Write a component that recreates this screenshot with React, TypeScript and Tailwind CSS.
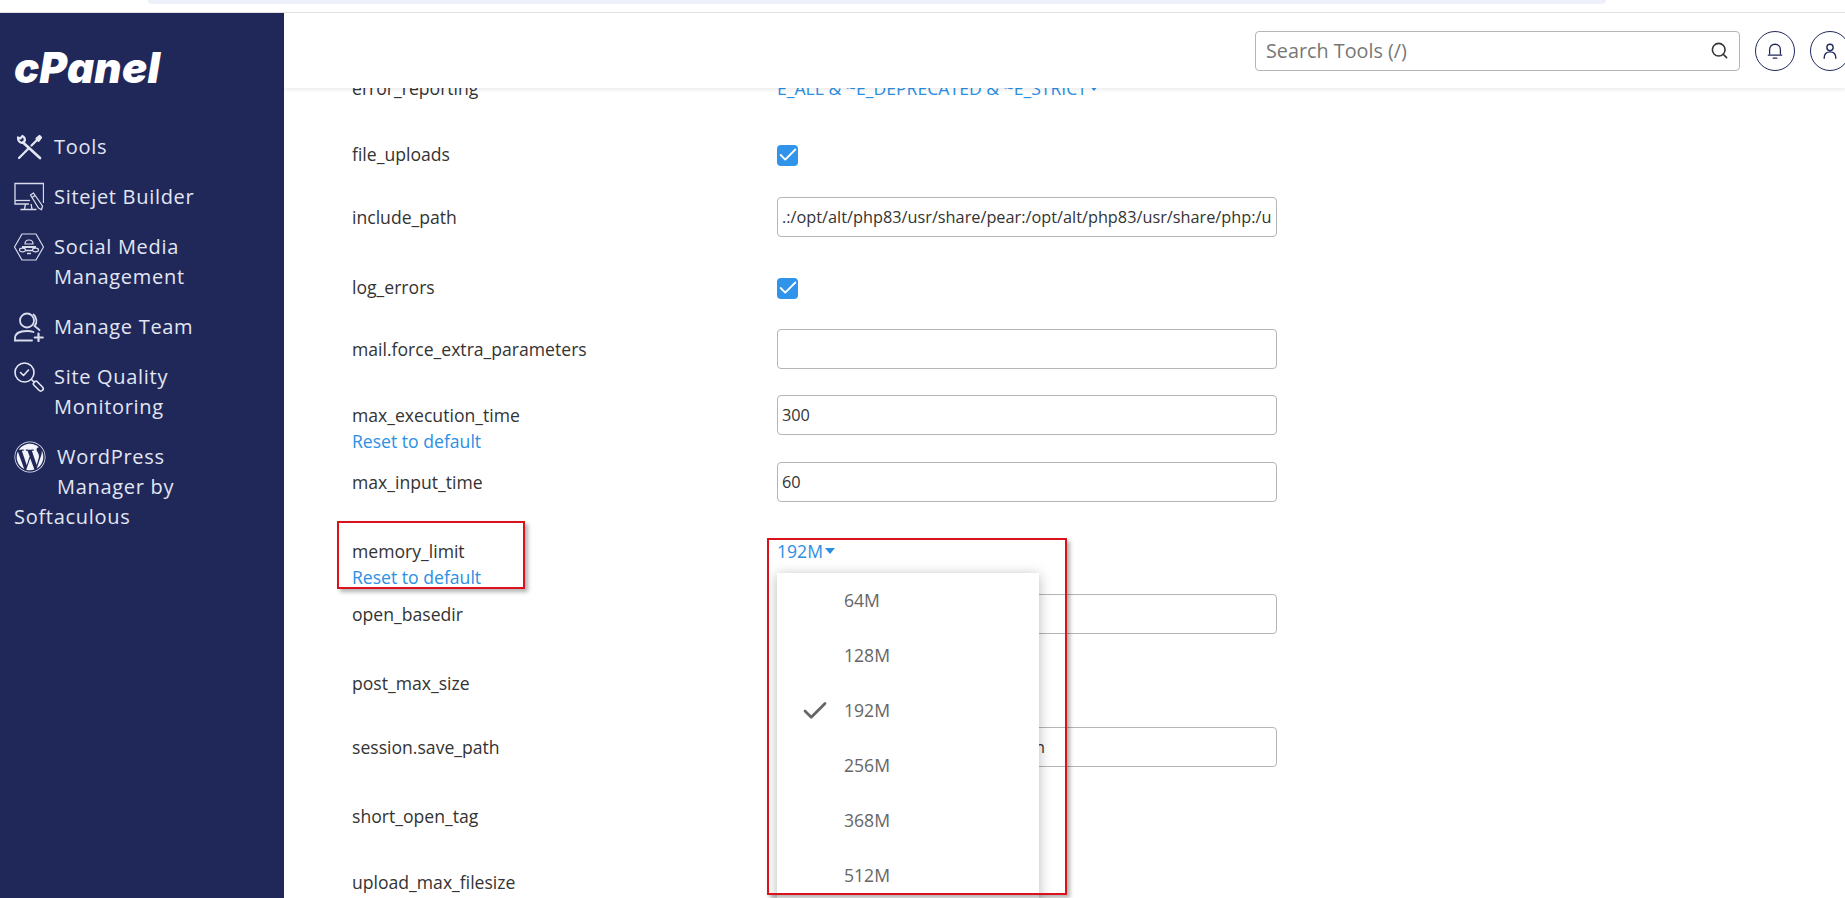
import React from 'react';
import { FaWordpress } from 'react-icons/fa';
import { Check, Search } from 'lucide-react';

function ToolsIcon() {
  return (
    <svg viewBox="0 0 30 30" className="w-[30px] h-[30px] shrink-0 text-[#e6e9f4]" fill="none" stroke="currentColor" strokeWidth="2.200" strokeLinecap="round" strokeLinejoin="round">
      <path d="M5 26 14.500 16.500M17.500 13.500 23 8" />
      <path d="M22.500 6.500 25.500 4 27 5.500 24.500 8.800Z" fill="currentColor" />
      <path d="M9 10.500 26 26" strokeWidth="2.600" />
      <path d="M8.500 4 6.300 6.500 4 5.500C3.500 9 6.500 11.500 9.300 10.600 10.800 9.600 11.200 7.500 10.300 5.500Z" />
    </svg>
  );
}

function SitejetIcon() {
  return (
    <svg viewBox="0 0 30 30" className="w-[30px] h-[30px] shrink-0 text-[#d9dcea]" fill="none" stroke="currentColor" strokeWidth="1.300">
      <path d="M15 22H1V1.500H29.500V21" />
      <path d="M1 18.500H16" />
      <path d="M11.500 22 10.500 27M17 22 18 27M6.500 27.500H22.500" />
      <path d="M16.500 13 19.500 11 28.500 24 27.500 27.800 24.500 26Z" strokeLinejoin="round" />
      <path d="M18 15.500 21 13.500" />
    </svg>
  );
}

function SocialIcon() {
  return (
    <svg viewBox="0 0 30 30" className="w-[30px] h-[30px] shrink-0 text-[#d9dcea]" fill="none" stroke="currentColor" strokeWidth="1.200">
      <path d="M8 2H22L29.500 15 22 28H8L0.500 15Z" strokeLinejoin="round" />
      <path d="M11 12C11 9 13 8 15 8S19 9 19 12Z" />
      <path d="M8 15H22" strokeWidth="2" />
      <ellipse cx="8.500" cy="18" rx="3" ry="1.800" />
      <ellipse cx="21.500" cy="18" rx="3" ry="1.800" />
      <path d="M12 18.500H18M13 21.500H17" strokeWidth="1.500" />
    </svg>
  );
}

function TeamIcon() {
  return (
    <svg viewBox="0 0 30 30" className="w-[30px] h-[30px] shrink-0 text-[#d9dcea]" fill="none" stroke="currentColor" strokeWidth="1.800" strokeLinecap="round">
      <circle cx="13" cy="8.500" r="7" />
      <path d="M19.500 2.500C23 5 23.500 11 20.500 14L25.500 18" />
      <path d="M1 28.500V26.500C1 21.500 6 19 13 19C15.500 19 17.500 19.200 19.500 20" />
      <path d="M1 28.500H18" />
      <path d="M24.500 21.500V29M20.800 25.500H28.800" strokeWidth="2.200" />
    </svg>
  );
}

function QualityIcon() {
  return (
    <svg viewBox="0 0 30 30" className="w-[30px] h-[30px] shrink-0 text-[#e6e9f4]" fill="none" stroke="currentColor" strokeWidth="1.600" strokeLinecap="round" strokeLinejoin="round">
      <circle cx="10.500" cy="10.500" r="9.500" />
      <path d="M6.500 10.500 9.500 13.500 14.500 8" />
      <path d="M17.500 17.500 20 20" />
      <path d="M20 20.500 21 19.500C21.800 19 22.500 19 23 19.500L28.500 25C29.500 26 29.500 27.200 28.500 28.200 27.500 29.200 26 29.200 25 28.200L19.800 23C19 22.200 19.300 21.300 20 20.500Z" />
    </svg>
  );
}

const rows = [
  { label: 'error_reporting', mt: 'mt-0', kind: 'link', value: 'E_ALL & ~E_DEPRECATED & ~E_STRICT' },
  { label: 'file_uploads', mt: 'mt-[27px]', kind: 'check' },
  { label: 'include_path', mt: 'mt-[22px]', kind: 'input', value: '.:/opt/alt/php83/usr/share/pear:/opt/alt/php83/usr/share/php:/usr/share/pear:/usr/share/php' },
  { label: 'log_errors', mt: 'mt-[31px]', kind: 'check' },
  { label: 'mail.force_extra_parameters', mt: 'mt-[21px]', kind: 'input', value: '' },
  { label: 'max_execution_time', mt: 'mt-[26px]', kind: 'input', value: '300', reset: true },
  { label: 'max_input_time', mt: 'mt-[27px]', kind: 'input', value: '60' },
  { label: 'memory_limit', mt: 'mt-[29px]', kind: 'memory', value: '192M', reset: true },
  { label: 'open_basedir', mt: 'mt-[23px]', kind: 'input', value: '' },
  { label: 'post_max_size', mt: 'mt-[29px]', kind: 'none' },
  { label: 'session.save_path', mt: 'mt-[24px]', kind: 'input', value: '/opt/alt/php83/var/lib/php/session' },
  { label: 'short_open_tag', mt: 'mt-[29px]', kind: 'none' },
  { label: 'upload_max_filesize', mt: 'mt-[26px]', kind: 'none' },
];

const memoryOptions = ['64M', '128M', '192M', '256M', '368M', '512M'];

function Caret() {
  return <span className="ml-[2px] w-0 h-0 border-x-[5px] border-x-transparent border-t-[6px] border-t-[#2b8fe3]" />;
}

function MemoryControl({ value }: { value: string }) {
  return (
    <div className="relative h-10 flex items-center text-[#2b8fe3]">
      {value}
      <Caret />
      <div className="absolute left-0 top-[42px] w-[262px] bg-white shadow-[0_2px_12px_rgba(0,0,0,0.28)] z-10 text-[#666]">
        {memoryOptions.map((opt) => (
          <div key={opt} className="h-[55px] flex items-center pl-[67px] relative">
            {opt === '192M' && <Check className="absolute left-[23px] w-[30px] h-[30px]" strokeWidth={2.2} />}
            {opt}
          </div>
        ))}
      </div>
      <div className="absolute left-[-10px] top-[7px] w-[300px] h-[357px] border-[2.5px] border-[#d9121c] shadow-[3px_3px_4px_rgba(0,0,0,0.3)] z-20" />
    </div>
  );
}

function Control({ row }: { row: (typeof rows)[number] }) {
  if (row.kind === 'check') {
    return (
      <div className="h-10 flex items-center">
        <span className="w-[21px] h-[21px] rounded-[4px] bg-[#2f94ea] flex items-center justify-center">
          <Check className="w-[22px] h-[22px] shrink-0 text-white" strokeWidth={2} />
        </span>
      </div>
    );
  }
  if (row.kind === 'input') {
    return (
      <input
        readOnly
        value={row.value}
        className="w-[500px] h-10 px-[4px] text-[16.3px] border border-[#b5b5b5] rounded-[4px] text-[#333] outline-none bg-white"
      />
    );
  }
  if (row.kind === 'link') {
    return (
      <div className="h-10 flex items-center text-[#2b8fe3]">
        {row.value}
        <Caret />
      </div>
    );
  }
  if (row.kind === 'memory') return <MemoryControl value={row.value!} />;
  return <div className="h-10" />;
}

export default function App() {
  return (
    <div className="h-screen overflow-hidden bg-white flex flex-col font-['Open_Sans',sans-serif] text-[17.6px] text-[#333]">
      <div className="h-[13px] shrink-0 border-b border-[#e2e2e2]">
        <div className="ml-[148px] w-[1458px] h-1 bg-[#eef0f9] rounded-b-md" />
      </div>
      <div className="flex-1 flex min-h-0">
        <aside className="w-[284px] shrink-0 bg-[#20285a] text-[#e2e6f2] pl-[14px] text-[20px] leading-[30px] tracking-[0.7px]">
          <div className="h-[119px] pt-[26px]">
            <span className="text-white text-[42px] leading-[58px] font-black italic tracking-[0.3px] font-['Inter',sans-serif]">cPanel</span>
          </div>
          <nav className="flex flex-col gap-5">
            <a className="flex gap-[10px] items-start"><ToolsIcon />Tools</a>
            <a className="flex gap-[10px] items-start"><SitejetIcon />Sitejet Builder</a>
            <a className="flex gap-[10px] items-start"><SocialIcon /><span>Social Media<br />Management</span></a>
            <a className="flex gap-[10px] items-start"><TeamIcon />Manage Team</a>
            <a className="flex gap-[10px] items-start"><QualityIcon /><span>Site Quality<br />Monitoring</span></a>
            <a className="block w-[220px]">
              <span className="float-left w-[43px] h-[60px]">
                <FaWordpress className="w-8 h-8 -mt-px text-[#f2f4fa]" />
              </span>
              WordPress Manager by Softaculous
            </a>
          </nav>
        </aside>
        <main className="flex-1 min-w-0 flex flex-col">
          <header className="h-[75px] shrink-0 bg-white shadow-[0_2px_4px_rgba(0,0,0,0.08)] relative z-30 flex items-center pl-[971px] gap-[15px]">
            <div className="w-[485px] h-10 shrink-0 border border-[#b5b5b5] rounded-[4px] flex items-center justify-between pl-[10px] pr-[10px]">
              <span className="text-[19.8px] text-[#777]">Search Tools (/)</span>
              <Search className="w-[19px] h-[19px] text-[#333]" strokeWidth={2} />
            </div>
            <button className="w-10 h-10 shrink-0 rounded-full border border-[#20285a] flex items-center justify-center text-[#20285a]">
              <svg viewBox="0 0 20 20" className="w-[18px] h-[18px]" fill="none" stroke="currentColor" strokeWidth="1.400">
                <path d="M4 14V8.500C4 5 6.500 2.500 10 2.500S16 5 16 8.500V14" />
                <path d="M2.500 14.500H17.500M8 18H12" strokeLinecap="round" />
              </svg>
            </button>
            <button className="w-10 h-10 shrink-0 rounded-full border border-[#20285a] flex items-center justify-center text-[#20285a]">
              <svg viewBox="0 0 20 20" className="w-[18px] h-[18px]" fill="none" stroke="currentColor" strokeWidth="1.500">
                <circle cx="10" cy="6" r="3.500" />
                <path d="M3.500 18C3.500 13.500 6 11 10 11S16.500 13.500 16.500 18" strokeLinecap="round" />
              </svg>
            </button>
          </header>
          <div className="flex-1 min-h-0 pl-[68px] mt-[-20px]">
            {rows.map((row) => (
              <div key={row.label} className={`${row.mt} flex h-10`}>
                <div className="w-[425px] shrink-0 relative">
                  <div className={`h-10 flex items-center ${row.kind === 'check' ? 'pb-[2px]' : ''}`}>{row.label}</div>
                  {row.reset && <div className="text-[#2b8fe3] leading-[26px] -mt-[7px]">Reset to default</div>}
                  {row.kind === 'memory' && (
                    <div className="absolute left-[-15px] top-[-10px] w-[188px] h-[68px] border-[2.5px] border-[#d9121c] shadow-[3px_3px_4px_rgba(0,0,0,0.3)]" />
                  )}
                </div>
                <div className="relative">
                  <Control row={row} />
                </div>
              </div>
            ))}
          </div>
        </main>
      </div>
    </div>
  );
}
